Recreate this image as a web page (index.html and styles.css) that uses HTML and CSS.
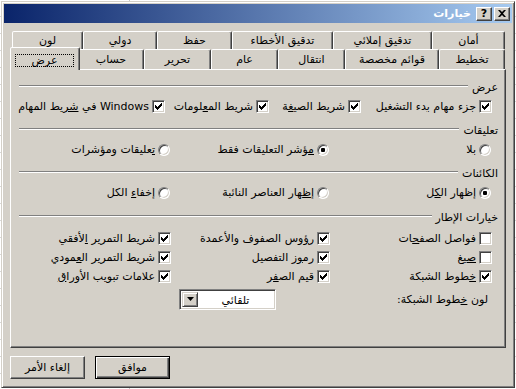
FILE: index.html
```html
<!DOCTYPE html>
<html lang="ar" dir="rtl">
  <head>
    <meta charset="UTF-8" />
    <title>خيارات</title>
    <link rel="stylesheet" href="styles.css">
  </head>
  <body>
    <div class="window">
      <div class="titlebar">
        <button class="cap-btn">
          <svg width="8" height="7" viewBox="0 0 8 7"><path d="M0 0h2l2 2 2-2h2L5 3.5 8 7H6L4 5 2 7H0l3-3.5z" fill="#000"/></svg>
        </button>
        <button class="cap-btn">?</button>
        <span class="title">خيارات</span>
      </div>

      <div class="tabs">
        <div class="tab-row back">
          <div class="tab">أمان</div>
          <div class="tab">تدقيق إملائي</div>
          <div class="tab">تدقيق الأخطاء</div>
          <div class="tab">حفظ</div>
          <div class="tab">دولي</div>
          <div class="tab">لون</div>
        </div>
        <div class="tab-row front">
          <div class="tab">تخطيط</div>
          <div class="tab">قوائم مخصصة</div>
          <div class="tab">انتقال</div>
          <div class="tab">عام</div>
          <div class="tab">تحرير</div>
          <div class="tab">حساب</div>
          <div class="tab active"><span class="focus">عرض</span></div>
        </div>
      </div>

      <!-- access keys: &zwj; keeps the letters joined across the <u> -->
      <div class="panel">
        <div class="group">
          <div class="legend"><span>عرض</span></div>
          <div class="row row-view">
            <label class="opt"><span class="cb on"></span><span>جزء مهام <u>ب&zwj;</u>&zwj;دء التشغيل</span></label>
            <label class="opt"><span class="cb on"></span><span>شريط الصي&zwj;<u>&zwj;غ&zwj;</u>&zwj;ة</span></label>
            <label class="opt"><span class="cb on"></span><span>شريط الم&zwj;<u>&zwj;ع&zwj;</u>&zwj;لومات</span></label>
            <label class="opt"><span class="cb on"></span><span>Windows في <u>شر</u>يط المهام</span></label>
          </div>
        </div>

        <div class="group">
          <div class="legend"><span>تعليقات</span></div>
          <div class="row cols3">
            <label class="opt"><span class="rb"></span><span><u>ب&zwj;</u>&zwj;لا</span></label>
            <label class="opt"><span class="rb on"></span><span><u>م&zwj;</u>&zwj;ؤشر التعليقات فقط</span></label>
            <label class="opt"><span class="rb"></span><span><u>ت&zwj;</u>&zwj;عليقات ومؤشرات</span></label>
          </div>
        </div>

        <div class="group">
          <div class="legend"><span>الكائنات</span></div>
          <div class="row cols3">
            <label class="opt"><span class="rb on"></span><span>إظهار ال&zwj;<u>&zwj;ك&zwj;</u>&zwj;ل</span></label>
            <label class="opt"><span class="rb"></span><span>إ<u>ظ&zwj;</u>&zwj;هار العناصر النائبة</span></label>
            <label class="opt"><span class="rb"></span><span>إخفا<u>ء</u> الكل</span></label>
          </div>
        </div>

        <div class="group frame">
          <div class="legend"><span>خيارات الإطار</span></div>
          <div class="row cols3">
            <label class="opt"><span class="cb"></span><span>فواصل الصف&zwj;<u>&zwj;ح&zwj;</u>&zwj;ات</span></label>
            <label class="opt"><span class="cb on"></span><span>ر<u>ؤ</u>وس الصفوف والأعمدة</span></label>
            <label class="opt"><span class="cb on"></span><span>شريط التمرير <u>ا</u>لأفقي</span></label>
          </div>
          <div class="row cols3">
            <label class="opt"><span class="cb"></span><span><u>ص&zwj;</u>&zwj;يغ</span></label>
            <label class="opt"><span class="cb on"></span><span>رم&zwj;<u>&zwj;و</u>ز التفصيل</span></label>
            <label class="opt"><span class="cb on"></span><span>شريط التمرير ال&zwj;<u>&zwj;ع&zwj;</u>&zwj;مودي</span></label>
          </div>
          <div class="row cols3">
            <label class="opt"><span class="cb on"></span><span><u>خ&zwj;</u>&zwj;طوط الشبكة</span></label>
            <label class="opt"><span class="cb on"></span><span>قيم الص&zwj;<u>&zwj;ف&zwj;</u>&zwj;ر</span></label>
            <label class="opt"><span class="cb on"></span><span>علامات تبويب الأورا<u>ق</u></span></label>
          </div>
          <div class="row-select">
            <span class="select-label">لون <u>خ&zwj;</u>&zwj;طوط الشبكة:</span>
            <div class="select">
              <span class="select-value">تلقائي</span>
              <span class="select-btn">
                <svg width="7" height="4" viewBox="0 0 7 4"><path d="M0 0h7L3.5 4z" fill="#000"/></svg>
              </span>
            </div>
          </div>
        </div>
      </div>

      <div class="footer">
        <button class="btn default">موافق</button>
        <button class="btn">إلغاء الأمر</button>
      </div>
    </div>
  </body>
</html>
```

FILE: styles.css
```css
* {
  box-sizing: border-box;
}

body {
  margin: 0;
  width: 516px;
  height: 389px;
  padding: 1px;
  overflow: hidden;
  background-color: #fff;
  background-image:
    linear-gradient(90deg, transparent 129px, #c8c8c8 129px, #c8c8c8 130px, transparent 130px),
    repeating-linear-gradient(#fff 0 16px, #d8d8d8 16px 17px);
  font-family: "DejaVu Sans", sans-serif;
  font-size: 11px;
  color: #000;
}

u {
  text-decoration: underline;
  text-underline-offset: 1px;
}

.window {
  width: 514px;
  height: 387px;
  padding: 2px;
  display: flex;
  flex-direction: column;
  background: #d4d0c8;
  border: 1px solid;
  border-color: #d4d0c8 #404040 #404040 #d4d0c8;
  box-shadow: inset 1px 1px #fff, inset -1px -1px #808080;
}

/* caption */
.titlebar {
  height: 19px;
  display: flex;
  align-items: center;
  gap: 2px;
  padding-right: 2px;
  background: linear-gradient(to right, #0a246a, #a6caf0);
  color: #fff;
  font-weight: bold;
}

.cap-btn {
  width: 16px;
  height: 14px;
  padding: 0;
  display: flex;
  align-items: center;
  justify-content: center;
  background: #d4d0c8;
  border: 1px solid;
  border-color: #fff #404040 #404040 #fff;
  box-shadow: inset -1px -1px #808080;
  font: bold 11px "DejaVu Sans", sans-serif;
  color: #000;
}

.title {
  margin-right: 3px;
}

/* tabs */
.tabs {
  margin: 8px 6px 0 6px;
}

.tab-row {
  display: grid;
  padding: 0 1px 0 2px;
}

.tab-row.back {
  height: 18px;
  grid-template-columns: 73px 99px 101px 75px 74px 71px;
}

.tab-row.front {
  height: 20px;
  grid-template-columns: 66px 94px 67px 67px 67px 66px 66px;
}

.tab {
  padding-top: 1px;
  line-height: 16px;
  text-align: center;
  white-space: nowrap;
  background: #d4d0c8;
  border: 1px solid;
  border-bottom: 0;
  border-color: #fff #404040 transparent #fff;
  border-radius: 2px 2px 0 0;
  box-shadow: inset -1px 0 #808080;
}

.front .tab {
  padding-top: 2px;
}

.front .tab.active {
  position: relative;
  z-index: 1;
  margin: -2px -2px -1px -2px;
  padding: 6px 5px 0 4px;
}

.focus {
  display: block;
  height: 13px;
  line-height: 11px;
  border: 1px dotted #000;
}

/* page */
.panel {
  height: 279px;
  margin: 0 6px;
  padding: 8px 7px 0 8px;
  border: 1px solid;
  border-color: #fff #404040 #404040 #fff;
  box-shadow: inset -1px -1px #808080;
}

.group + .group {
  margin-top: 5px;
}

.group.frame {
  margin-top: 6px;
}

.legend {
  height: 18px;
  margin-bottom: 1px;
  display: flex;
  align-items: center;
  gap: 4px;
  white-space: nowrap;
}

.frame .legend {
  margin-bottom: 3px;
}

.legend::after {
  content: "";
  flex: 1;
  margin-bottom: 3px;
  border-top: 1px solid #808080;
  border-bottom: 1px solid #fff;
}

.row {
  height: 19px;
  display: grid;
  align-items: center;
  padding-right: 6px;
}

.row-view {
  grid-template-columns: 131px 92px 104px 1fr;
}

.cols3 {
  grid-template-columns: 162px 159px 1fr;
}

.opt {
  display: flex;
  align-items: center;
  gap: 3px;
  white-space: nowrap;
}

.cb {
  flex: none;
  width: 13px;
  height: 13px;
  background: #fff;
  border: 1px solid;
  border-color: #808080 #fff #fff #808080;
  box-shadow: inset 1px 1px #404040, inset -1px -1px #d4d0c8;
}

.cb.on {
  background: #fff url("data:image/svg+xml,%3Csvg xmlns='http://www.w3.org/2000/svg' width='7' height='7' viewBox='0 0 7 7' shape-rendering='crispEdges'%3E%3Cpath d='M6 0h1v3H6v1H5v1H4v1H3v1H2V6H1V5H0V2h1v1h1v1h1V3h1V2h1V1h1z'/%3E%3C/svg%3E") no-repeat 2px 2px;
}

.rb {
  flex: none;
  width: 12px;
  height: 12px;
  margin-right: 1px;
  display: flex;
  align-items: center;
  justify-content: center;
  background: #fff;
  border: 1px solid;
  border-color: #808080 #fff #fff #808080;
  border-radius: 50%;
  box-shadow: inset 1px 1px #404040, inset -1px -1px #d4d0c8;
}

.rb.on::before {
  content: "";
  width: 4px;
  height: 4px;
  border-radius: 1px;
  background: #000;
}

.row-select {
  height: 22px;
  margin-top: 2px;
  display: flex;
  align-items: center;
  padding-right: 10px;
}

.select-label {
  width: 212px;
  white-space: nowrap;
}

.select {
  width: 97px;
  height: 21px;
  padding: 2px;
  display: flex;
  background: #fff;
  border: 1px solid;
  border-color: #808080 #fff #fff #808080;
  box-shadow: inset 1px 1px #404040, inset -1px -1px #d4d0c8;
}

.select-value {
  flex: 1;
  line-height: 17px;
  text-align: center;
}

.select-btn {
  width: 16px;
  display: flex;
  align-items: center;
  justify-content: center;
  background: #d4d0c8;
  border: 1px solid;
  border-color: #d4d0c8 #404040 #404040 #d4d0c8;
  box-shadow: inset 1px 1px #fff, inset -1px -1px #808080;
}

/* buttons */
.footer {
  display: flex;
  justify-content: flex-end;
  gap: 10px;
  margin-top: 8px;
  padding-left: 6px;
}

.btn {
  width: 75px;
  height: 23px;
  padding: 0;
  background: #d4d0c8;
  border: 1px solid;
  border-color: #fff #404040 #404040 #fff;
  box-shadow: inset -1px -1px #808080;
  font: 11px "DejaVu Sans", sans-serif;
  color: #000;
}

.btn.default {
  border-color: #000;
  box-shadow: inset 1px 1px #fff, inset -1px -1px #404040, inset -2px -2px #808080;
}
```
